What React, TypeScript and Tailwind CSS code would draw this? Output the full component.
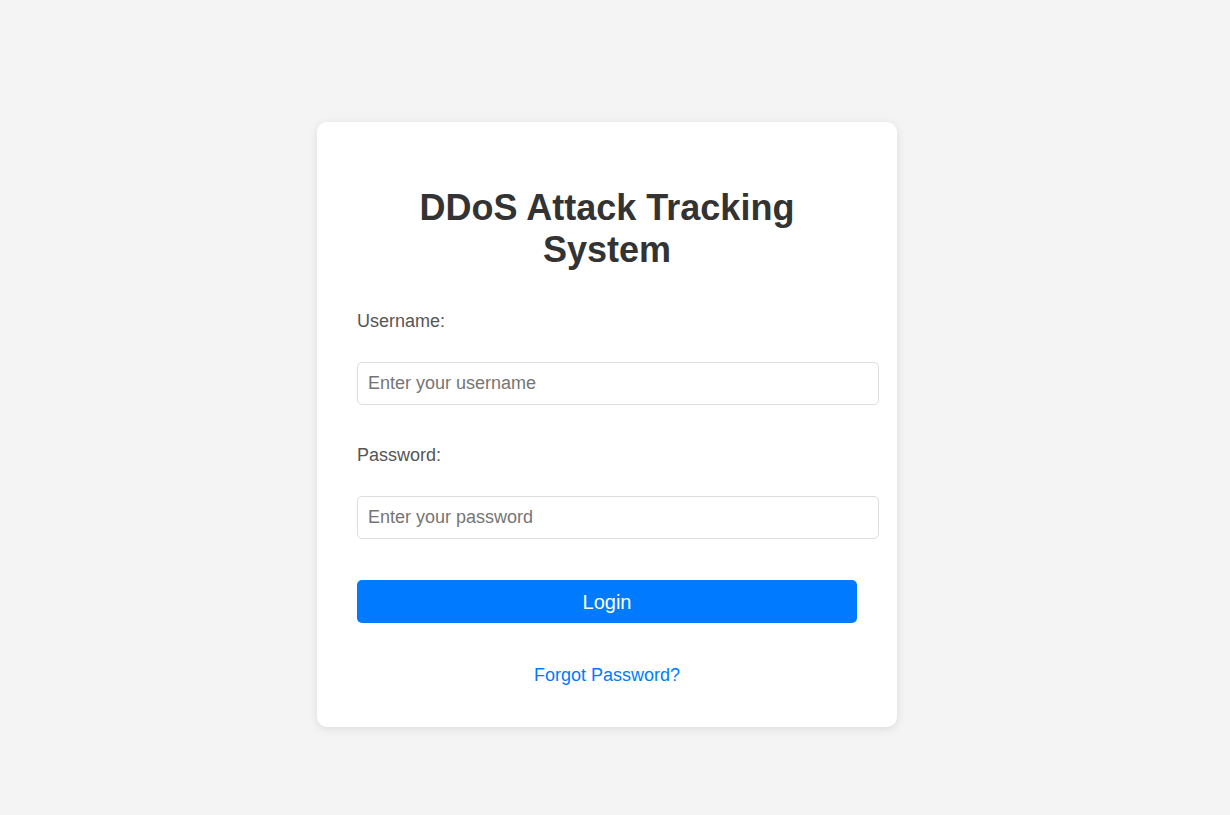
import * as React from "react";

export default function App() {
    const [username, setUsername] = React.useState("");
    const [password, setPassword] = React.useState("");

    return (
        <div className="min-h-screen bg-[#f4f4f4] flex justify-center pr-[16px] pt-[122px] font-['Liberation_Sans',Arial,sans-serif]">
            <div className="w-[580px] h-[605px] bg-white rounded-[10px] shadow-[0_2px_10px_rgba(0,0,0,0.1)] p-[40px]">
                {/* Title */}
                <h2 className="mt-[25px] text-[36px] leading-[42px] font-bold text-[#333] text-center">
                    DDoS Attack Tracking System
                </h2>

                <form onSubmit={(e) => e.preventDefault()}>
                    <label className="block mt-[40px] text-[18px] leading-[20.7px] text-[#555]">Username:</label>
                    <input
                        type="text"
                        value={username}
                        onChange={(e) => setUsername(e.target.value)}
                        placeholder="Enter your username"
                        className="block mt-[30px] w-[522px] h-[43px] px-[10px] text-[18px] text-[#333] placeholder:text-[#757575] border border-[#ddd] rounded-[5px] outline-none"
                    />

                    <label className="block mt-[40px] text-[18px] leading-[20.7px] text-[#555]">Password:</label>
                    <input
                        type="password"
                        value={password}
                        onChange={(e) => setPassword(e.target.value)}
                        placeholder="Enter your password"
                        className="block mt-[31px] w-[522px] h-[43px] px-[10px] text-[18px] text-[#333] placeholder:text-[#757575] border border-[#ddd] rounded-[5px] outline-none"
                    />

                    <button
                        type="submit"
                        className="block mt-[41px] w-[500px] h-[43px] bg-[#007bff] text-white text-[20px] rounded-[5px] cursor-pointer"
                    >
                        Login
                    </button>
                </form>

                <div className="mt-[42px] text-center text-[18px] leading-[20.7px]">
                    <a href="#" className="text-[#007bff]">Forgot Password?</a>
                </div>
            </div>
        </div>
    );
}
